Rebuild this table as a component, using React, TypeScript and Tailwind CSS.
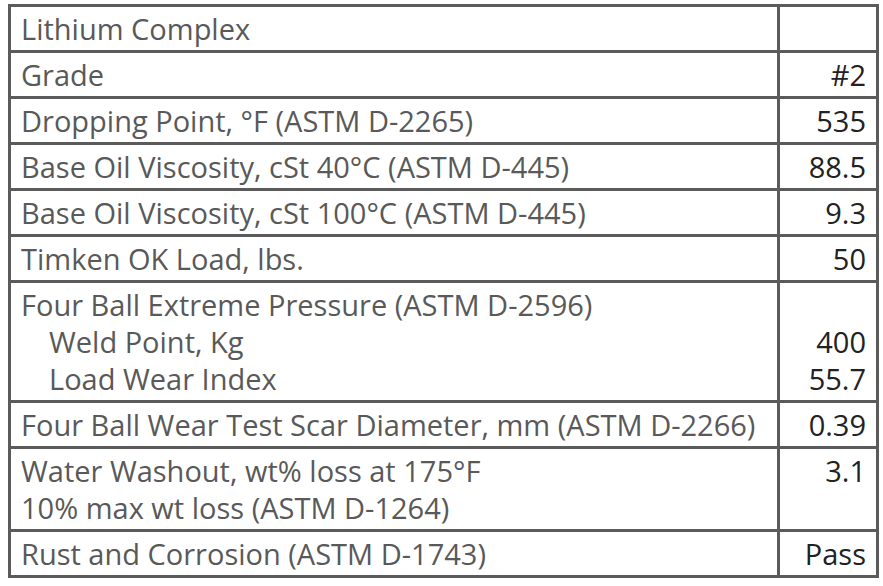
const rows: { label: string[]; value: string[]; indent?: boolean }[] = [
  { label: ['Lithium Complex'], value: [''] },
  { label: ['Grade'], value: ['#2'] },
  { label: ['Dropping Point, °F (ASTM D-2265)'], value: ['535'] },
  { label: ['Base Oil Viscosity, cSt 40°C (ASTM D-445)'], value: ['88.5'] },
  { label: ['Base Oil Viscosity, cSt 100°C (ASTM D-445)'], value: ['9.3'] },
  { label: ['Timken OK Load, lbs.'], value: ['50'] },
  {
    label: ['Four Ball Extreme Pressure (ASTM D-2596)', 'Weld Point, Kg', 'Load Wear Index'],
    value: ['', '400', '55.7'],
    indent: true,
  },
  { label: ['Four Ball Wear Test Scar Diameter, mm (ASTM D-2266)'], value: ['0.39'] },
  { label: ['Water Washout, wt% loss at 175°F', '10% max wt loss (ASTM D-1264)'], value: ['3.1', ''] },
  { label: ['Rust and Corrosion (ASTM D-1743)'], value: ['Pass'] },
]

export default function App() {
  return (
    <div className="min-h-screen bg-white pl-[8px] pt-[4px]" style={{ fontFamily: '"Open Sans", sans-serif' }}>
      <table className="w-[871px] border-collapse border-[3px] border-[#5b5b5b] text-[29px]">
        <tbody>
          {rows.map((row, i) => (
            <tr key={i}>
              <td className="border-[3px] border-[#5b5b5b] pl-[10px] py-[3px] text-[#595959]">
                {row.label.map((line, j) => (
                  <div key={j} className={`leading-[37px] whitespace-nowrap ${row.indent && j > 0 ? 'pl-[28px]' : ''}`}>
                    {line}
                  </div>
                ))}
              </td>
              <td className="w-[99px] border-[3px] border-[#5b5b5b] pr-[10px] py-[3px] text-right align-top text-[#222]">
                {row.value.map((line, j) => (
                  <div key={j} className="leading-[37px] h-[37px]">
                    {line}
                  </div>
                ))}
              </td>
            </tr>
          ))}
        </tbody>
      </table>
    </div>
  )
}
